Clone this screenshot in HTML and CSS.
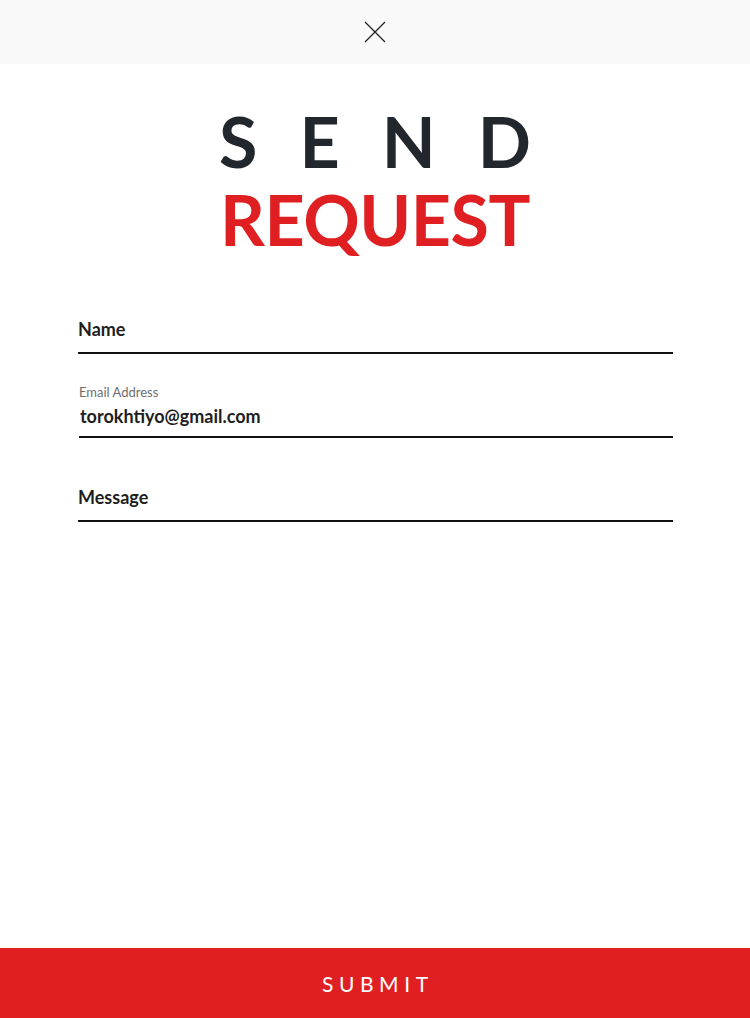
FILE: index.html
```html
<!DOCTYPE html>
<html lang="en">
<head>
<meta charset="utf-8">
<title>Send Request</title>
<link rel="stylesheet" href="styles.css">
</head>
<body>
<div class="page">
  <header class="topbar">
    <button class="close" aria-label="Close">
      <svg width="22" height="22" viewBox="0 0 22 22"><path d="M1 1 L21 21 M21 1 L1 21" stroke="#222" stroke-width="1.3" fill="none"/></svg>
    </button>
  </header>
  <main class="content">
    <h1 class="title">
      <span class="title-send">SEND</span>
      <span class="title-request">REQUEST</span>
    </h1>
    <form class="form">
      <div class="field field-name">
        <div class="field-value">Name</div>
      </div>
      <div class="field field-email">
        <div class="field-label">Email Address</div>
        <div class="field-value">torokhtiyo@gmail.com</div>
      </div>
      <div class="field field-message">
        <div class="field-value">Message</div>
      </div>
    </form>
  </main>
  <button class="submit">SUBMIT</button>
</div>
</body>
</html>
```
FILE: styles.css
```css
* { box-sizing: border-box; }
html, body { margin: 0; padding: 0; }
body {
  font-family: Lato, "Open Sans", sans-serif;
  background: #fff;
  color: #1c1c1c;
}
.page {
  display: flex;
  flex-direction: column;
  min-height: 100vh;
}
.topbar {
  height: 64px;
  background: #f9f9f9;
  display: flex;
  align-items: center;
  justify-content: center;
}
.close {
  border: 0;
  background: none;
  padding: 0;
  width: 22px;
  height: 22px;
  display: flex;
}
.content {
  flex: 1;
}
.title {
  margin: 38px 0 0;
  display: flex;
  flex-direction: column;
  align-items: center;
  font-weight: 700;
  font-size: 70px;
  line-height: 78px;
}
.title-send {
  color: #22272e;
  letter-spacing: 42px;
  padding-left: 42px;
}
.title-request {
  color: #e01f22;
  letter-spacing: -0.5px;
}
.form {
  margin: 61px 77px 0 78px;
  display: flex;
  flex-direction: column;
}
.field {
  border-bottom: 2px solid #111;
  padding-bottom: 13px;
}
.field-value {
  font-size: 18px;
  font-weight: 700;
  line-height: 20px;
  color: #1e1e1e;
}
.field-email {
  margin-top: 31px;
  margin-left: 1px;
  padding-bottom: 10px;
}
.field-email .field-value {
  margin-top: 7px;
  padding-left: 1px;
}
.field-label {
  font-size: 13px;
  line-height: 14px;
  color: #6e6e6e;
}
.field-message {
  margin-top: 49px;
}
.submit {
  border: 0;
  height: 70px;
  width: 100%;
  background: #e01f22;
  color: #fff;
  font-family: Lato, sans-serif;
  font-size: 21px;
  letter-spacing: 5.6px;
  padding: 0 0 0 5.6px;
}
```
